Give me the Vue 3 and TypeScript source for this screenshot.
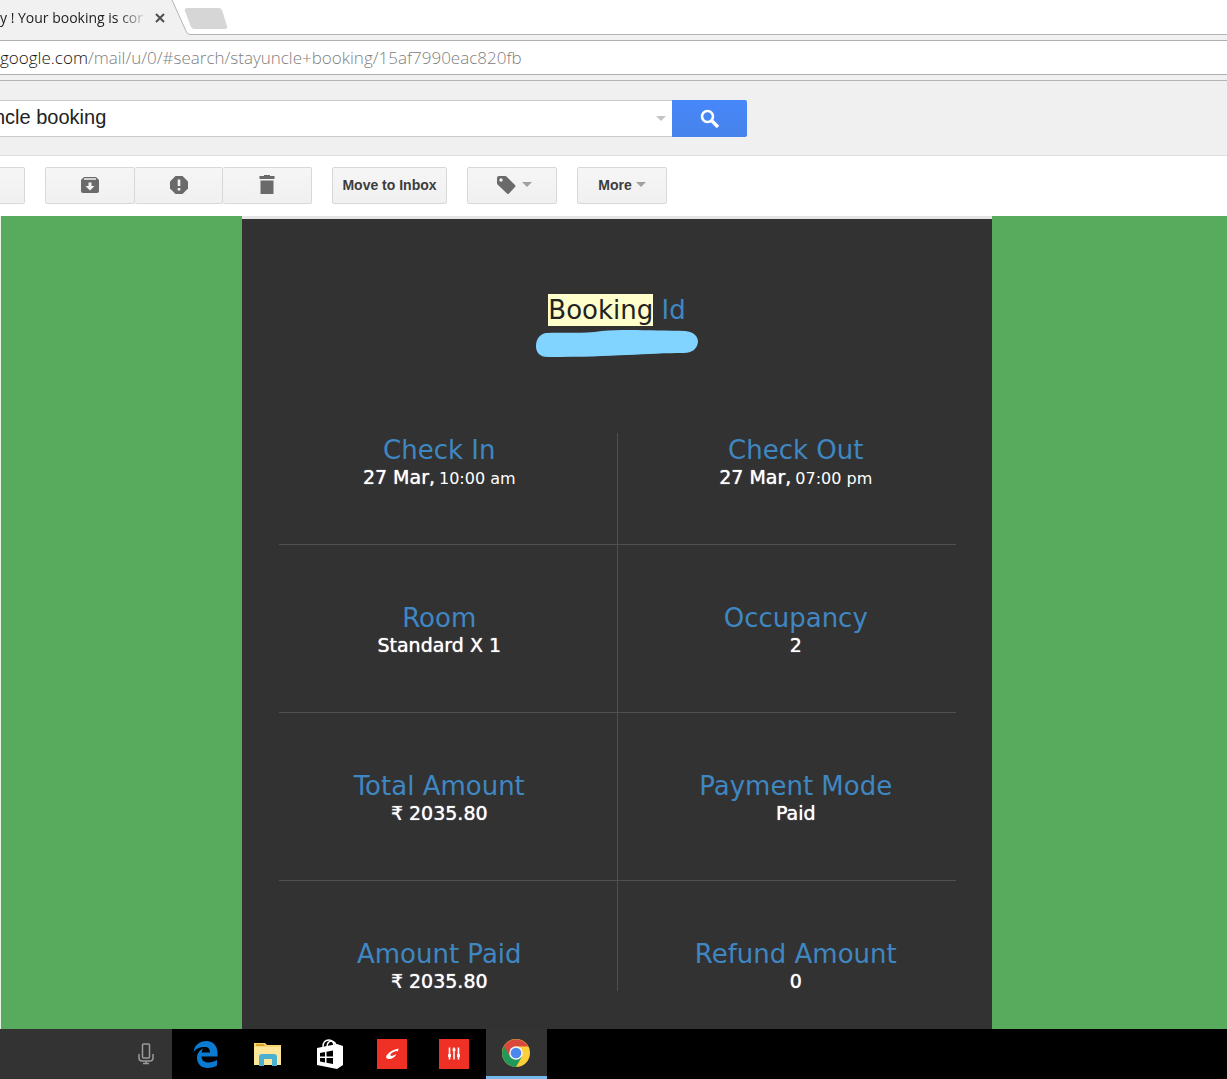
<script setup lang="ts">
import { ref } from 'vue'

interface Detail {
  label: string
  value: string
  note?: string
}

const query = ref('ncle booking')

const details: Detail[] = [
  { label: 'Check In', value: '27 Mar,', note: '10:00 am' },
  { label: 'Check Out', value: '27 Mar,', note: '07:00 pm' },
  { label: 'Room', value: 'Standard X 1' },
  { label: 'Occupancy', value: '2' },
  { label: 'Total Amount', value: '₹ 2035.80' },
  { label: 'Payment Mode', value: 'Paid' },
  { label: 'Amount Paid', value: '₹ 2035.80' },
  { label: 'Refund Amount', value: '0' },
]
</script>

<template>
  <div class="screen">
    <header class="tabs">
      <div class="tab">
        <span class="tab-title">y ! Your booking is cor</span>
        <button class="tab-close" aria-label="Close tab">
          <svg width="10" height="10" viewBox="0 0 10 10"><path d="M1 1l8 8M9 1l-8 8" stroke="#505050" stroke-width="2" /></svg>
        </button>
      </div>
      <svg class="tab-edge" width="60" height="35" viewBox="0 0 60 35">
        <path d="M0 0H1L15 32Q16 35 19 35H0Z" fill="#f1f1f1" />
        <path d="M1 0L15 31Q16 34.500 19 34.500H60" fill="none" stroke="#b4b4b4" />
        <path d="M16 8H48Q50 8 51 10L56 26Q57 29 54 29H24Q21 29 20 27L14 11Q13 8 16 8Z" fill="#d6d6d6" />
      </svg>
      <div class="tab-rest"></div>
    </header>

    <div class="address">
      <div class="url"><span class="host">google.com</span>/mail/u/0/#search/stayuncle+booking/15af7990eac820fb</div>
    </div>

    <form class="search" @submit.prevent>
      <div class="search-box">
        <input v-model="query" class="search-input" type="text" aria-label="Search mail" />
        <span class="caret pale"></span>
      </div>
      <button class="search-button" aria-label="Search">
        <svg width="20" height="20" viewBox="0 0 20 20" fill="none" stroke="#fff">
          <circle cx="7.500" cy="7.500" r="5.500" stroke-width="2.600" />
          <path d="M11.500 11.500L18 18" stroke-width="3.400" />
        </svg>
      </button>
    </form>

    <nav class="toolbar">
      <button class="btn back" aria-label="Back"></button>
      <div class="group">
        <button class="btn" aria-label="Archive">
          <svg width="20" height="20" viewBox="0 0 20 20">
            <path d="M4 2H16L19 5V16Q19 18 17 18H3Q1 18 1 16V5Z" fill="#6a6a6a" />
            <path d="M4 4H16" stroke="#f3f3f3" stroke-width="1.500" />
            <path d="M8.500 7.500H11.500V11H14.500L10 15.500L5.500 11H8.500Z" fill="#f3f3f3" />
          </svg>
        </button>
        <button class="btn" aria-label="Report spam">
          <svg width="20" height="20" viewBox="0 0 20 20">
            <path d="M6.500 1H13.500L19 6.500V13.500L13.500 19H6.500L1 13.500V6.500Z" fill="#6a6a6a" />
            <path d="M10 4.500V11M10 13V15.500" stroke="#f3f3f3" stroke-width="2.600" />
          </svg>
        </button>
        <button class="btn" aria-label="Delete">
          <svg width="20" height="20" viewBox="0 0 20 20" fill="#6a6a6a"><path d="M7 0H13V1H17.500V4H2.500V1H7ZM3.500 5.500H16.500V19H3.500Z" /></svg>
        </button>
      </div>
      <button class="btn move">Move to Inbox</button>
      <button class="btn menu" aria-label="Labels">
        <svg width="20" height="20" viewBox="0 0 20 20">
          <path d="M3 1H9Q10 1 11 2L19 10Q20 11 19 12L13 18.500Q12 19.500 11 18.500L2 10Q1 9 1 8V3Q1 1 3 1Z" fill="#6a6a6a" />
          <circle cx="5" cy="5" r="1.700" fill="#f3f3f3" />
        </svg>
        <span class="caret"></span>
      </button>
      <button class="btn more">More<span class="caret"></span></button>
    </nav>

    <main class="mail">
      <article class="ticket">
        <h1 class="title"><mark>Booking</mark> Id</h1>
        <svg class="redaction" width="162" height="28" viewBox="0 0 162 28">
          <path d="M10 3C30 2 45 4 66 1C90 -1 125 1 149 1C158 2 162 6 162 12C161 19 156 23 148 23C110 23 80 27 12 27C3 27 0 22 0 16C0 9 4 4 10 3Z" fill="#80d4ff" />
        </svg>
        <dl class="details">
          <div v-for="item in details" :key="item.label" class="cell">
            <dt>{{ item.label }}</dt>
            <dd>{{ item.value }}<small v-if="item.note">{{ item.note }}</small></dd>
          </div>
        </dl>
      </article>
    </main>

    <footer class="taskbar">
      <div class="cortana">
        <svg width="16" height="22" viewBox="0 0 16 22" fill="none" stroke="#9a9a9a">
          <rect x="4.500" y="1" width="7" height="14" rx="1" stroke-width="1.500" />
          <path d="M1 11V15Q1 18 4 18H12Q15 18 15 15V11M8 18V21M5 20.500H11" stroke-width="1.500" />
        </svg>
      </div>
      <button class="app" aria-label="Edge">
        <svg width="25" height="27" viewBox="0 0 24 27"><path fill="#0b7ad1" d="M0 11C1 4 6 0 13 0C20 0 24 5 24 12V15.500H8C8 20 12 21.500 15 21.500C18 21.500 21 20.500 23.500 19V24.500C21 26 18 27 14 27C8 27 3.500 23 3.500 17C3.500 12 6.500 9 9.500 7.500C9 8.500 8.300 9.800 8 11.500H16.500C16.500 8 15 6 11 6C6 6 2 8 0 11Z" /></svg>
      </button>
      <button class="app" aria-label="File Explorer">
        <svg width="28" height="24" viewBox="0 0 28 24">
          <path d="M0 1H11L13 3H27V23H0Z" fill="#f7d673" />
          <path d="M2 2H10L11 4H2Z" fill="#d9a52e" />
          <path d="M0 5H27V23H0Z" fill="#fde59a" />
          <path d="M5 24V15Q5 12 8 12H20Q23 12 23 15V24H18V17H10V24Z" fill="#49b1cf" />
        </svg>
      </button>
      <button class="app" aria-label="Store">
        <svg width="26" height="30" viewBox="0 0 26 30">
          <path d="M6 8C6 2 9 1 12 1C15 1 17 4 17 7M10 8C10 3 13 2 15 2C18 3 19 5 19 7" fill="none" stroke="#fff" stroke-width="1.400" />
          <path d="M0 9L20 5L26 7V26L20 30L0 26Z" fill="#fff" />
          <path d="M3 14L8 13V17.500H3ZM9.500 12.700L16 11.500V17.500H9.500ZM3 19H8V23.500L3 22.500ZM9.500 19H16V25L9.500 23.800Z" fill="#000" />
        </svg>
      </button>
      <button class="app" aria-label="Creative">
        <svg width="30" height="30" viewBox="0 0 30 30">
          <path d="M0 0H30V30H0Z" fill="#ee3124" />
          <path d="M18 10.500L21.500 9.500L21 12.500L19.500 12C17 12.500 13 14.500 13.500 16.500C14.500 17.500 17 16.500 19.500 15C18 18.500 15 20 12 20C9.500 20 8.500 18.500 9.500 16.500C11 14 14.500 11.500 18 10.500Z" fill="#fff" />
        </svg>
      </button>
      <button class="app" aria-label="Mixer">
        <svg width="30" height="30" viewBox="0 0 30 30">
          <path d="M0 0H30V30H0Z" fill="#ee3124" />
          <path d="M10.500 8.500V20.500M15 8.500V20.500M19.500 8.500V20.500" stroke="#fff" stroke-width="1.600" />
          <path d="M10.500 15V18M15 9.500V12M19.500 15V18" stroke="#fff" stroke-width="2.800" />
        </svg>
      </button>
      <button class="app active" aria-label="Chrome">
        <svg width="28" height="28" viewBox="0 0 28 28">
          <circle cx="14" cy="14" r="14" fill="#fdcf3c" />
          <path d="M14 14L1.900 7A14 14 0 0 0 14 28L20 17.500Z" fill="#21995a" />
          <path d="M14 14L8 17.500L1.900 7A14 14 0 0 1 26.100 7.500H14Z" fill="#d9483b" />
          <circle cx="14" cy="14" r="6.800" fill="#f4f4f4" />
          <circle cx="14" cy="14" r="5.300" fill="#4a87ee" />
        </svg>
      </button>
    </footer>
  </div>
</template>

<style>
body {
  margin: 0;
}
</style>

<style scoped>
* {
  box-sizing: border-box;
}

button {
  border: 0;
  padding: 0;
  font: inherit;
}

svg {
  display: block;
  flex: none;
}

.screen {
  display: flex;
  flex-direction: column;
  min-height: 100vh;
  overflow: hidden;
  background: #fff;
  font-family: "Liberation Sans", Arial, sans-serif;
}

.tabs {
  display: flex;
  height: 35px;
}

.tab {
  display: flex;
  align-items: center;
  width: 171px;
  background: #f1f1f1;
}

.tab-title {
  width: 148px;
  color: #222;
  font: 14px/20px "Open Sans", "Noto Sans", sans-serif;
  white-space: nowrap;
  mask-image: linear-gradient(to right, #000 118px, transparent 148px);
}

.tab-close {
  display: flex;
  align-items: center;
  justify-content: center;
  width: 23px;
  height: 20px;
  background: none;
}

.tab-rest {
  flex: 1;
  border-bottom: 1px solid #b4b4b4;
}

.address {
  padding: 5px 0;
  border-bottom: 1px solid #b4b4b4;
  background: #f1f1f1;
}

.url {
  height: 35px;
  border: solid #b0b0b0;
  border-width: 1px 0;
  background: #fff;
  color: #808080;
  font: 350 17px/33px "Open Sans", "Noto Sans", sans-serif;
  white-space: nowrap;
}

.host {
  color: #111;
}

.search {
  display: flex;
  padding: 19px 0 18px;
  border-bottom: 1px solid #e0e0e0;
  background: #f0f0f0;
}

.search-box {
  display: flex;
  align-items: center;
  width: 672px;
  height: 37px;
  padding-right: 6px;
  border: solid #cacaca;
  border-width: 1px 0;
  background: #fff;
}

.search-input {
  flex: 1;
  min-width: 0;
  height: 35px;
  padding: 0 0 2px;
  border: 0;
  outline: 0;
  background: none;
  color: #222;
  font: 20px/33px "Liberation Sans", Arial, sans-serif;
  text-indent: -6px;
}

.search-button {
  display: flex;
  align-items: center;
  justify-content: center;
  width: 75px;
  height: 37px;
  border-radius: 0 2px 2px 0;
  background: linear-gradient(#4787fa, #4683ea);
}

.caret {
  border: solid transparent;
  border-width: 5px 5px 0;
  border-top-color: #a0a0a0;
}

.caret.pale {
  border-top-color: #c4c4c4;
}

.toolbar {
  display: flex;
  gap: 20px;
  height: 60px;
  padding: 11px 0;
}

.btn {
  display: flex;
  align-items: center;
  justify-content: center;
  width: 90px;
  height: 37px;
  padding-bottom: 2px;
  border: 1px solid #d8d8d8;
  border-radius: 2px;
  background: linear-gradient(#f6f6f6, #f0f0f0);
  color: #3c3c3c;
  font-size: 14px;
  font-weight: 700;
}

.btn.back {
  width: 25px;
  border-left: 0;
  border-radius: 0 2px 2px 0;
}

.group {
  display: flex;
  width: 267px;
}

.group .btn {
  flex: 1;
}

.group .btn + .btn {
  border-left: 0;
}

.btn.move {
  width: 115px;
}

.btn.menu {
  gap: 6px;
  padding-left: 4px;
}

.btn.more {
  gap: 4px;
}

.mail {
  display: grid;
  flex: 1;
  grid-template-columns: 241fr 750px 235fr;
  border-left: 1px solid #e8f4e8;
  background: #58ab5c;
}

.ticket {
  display: flex;
  flex-direction: column;
  grid-column: 2;
  align-items: center;
  border-top: 3px solid #e4e4e4;
  background: #323232;
  font-family: "DejaVu Sans", Verdana, sans-serif;
}

.title {
  margin: 75px 0 4px;
  color: #3f87c2;
  font-size: 26px;
  font-weight: 400;
  line-height: 32px;
}

.title mark {
  display: inline-block;
  background: #ffffcc;
  color: #222;
}

.redaction {
  margin-bottom: 75px;
}

.details {
  display: grid;
  grid-template-columns: 1fr 1fr;
  width: 677px;
  margin: 0 0 38px;
}

.cell {
  padding: 56px 17px 57px 0;
  border-bottom: 1px solid #505050;
  text-align: center;
}

.cell:nth-child(even) {
  padding-right: 0;
  padding-left: 18px;
  border-left: 1px solid #505050;
}

.cell:nth-child(-n + 2) {
  padding-top: 0;
}

.cell:nth-last-child(-n + 2) {
  padding-bottom: 0;
  border-bottom: 0;
}

dt {
  color: #3f87c2;
  font-size: 26px;
  line-height: 34px;
}

dd {
  margin: 0;
  color: #fff;
  font-size: 19px;
  line-height: 20px;
  text-shadow: 0 0 1px #fff;
}

dd small {
  margin-left: 4px;
  font-size: 16px;
  line-height: 16px;
  text-shadow: none;
}

.taskbar {
  display: flex;
  height: 50px;
  background: #000;
}

.cortana {
  display: flex;
  align-items: center;
  justify-content: flex-end;
  width: 172px;
  padding-right: 18px;
  background: #333;
}

.app {
  display: flex;
  align-items: center;
  justify-content: center;
  width: 62px;
  padding-right: 2px;
  background: none;
}

.cortana + .app {
  width: 66px;
  padding-right: 0;
}

.app.active {
  width: 61px;
  border-bottom: 3px solid #76b9ed;
  background: #333;
}
</style>
